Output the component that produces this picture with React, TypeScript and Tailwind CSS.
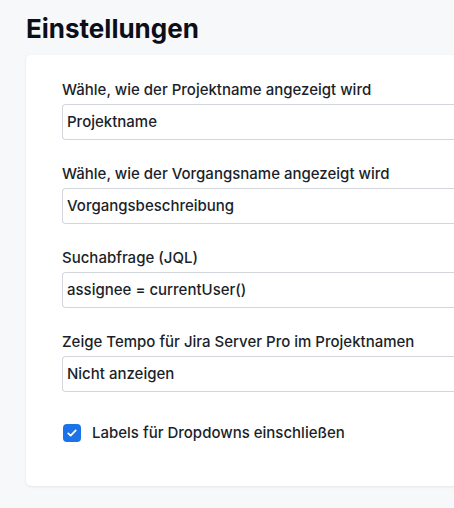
export default function App() {
  const fields = [
    { label: "Wähle, wie der Projektname angezeigt wird", value: "Projektname" },
    { label: "Wähle, wie der Vorgangsname angezeigt wird", value: "Vorgangsbeschreibung" },
    { label: "Suchabfrage (JQL)", value: "assignee = currentUser()" },
    { label: "Zeige Tempo für Jira Server Pro im Projektnamen", value: "Nicht anzeigen" },
  ];

  return (
    <div className="min-h-[508px] bg-[#f7f8fa] pl-[26px] font-['Inter',sans-serif] text-[#1b1f2a] overflow-hidden">
      <h1 className="pt-[13px] h-[55px] text-[26px] font-bold leading-[32px] text-[#0b0f19]">
        Einstellungen
      </h1>
      <div className="w-[460px] rounded-l-[5px] bg-white shadow-[0_1px_3px_rgba(0,0,0,0.08)] pl-[36px] pt-[25px] pb-[43px]">
        <div className="flex flex-col gap-[24px]">
          {fields.map((f, i) => (
            <div key={i} className="flex flex-col">
              <label className="text-[15px] leading-[20px] mb-[4px] font-medium">{f.label}</label>
              <div className="h-[36px] border border-[#d3d6dc] rounded-l-[4px] border-r-0 flex items-center pl-[4px] text-[15px] font-medium">
                {f.value}
              </div>
            </div>
          ))}
        </div>
        <div className="mt-[31px] flex items-center gap-[11px] h-[20px]">
          <span className="ml-[1px] w-[18px] h-[18px] rounded-[4px] bg-[#1a73e8] flex items-center justify-center">
            <svg viewBox="0 0 16 16" className="w-[12px] h-[12px]" fill="none" stroke="white" strokeWidth="2.4" strokeLinecap="round" strokeLinejoin="round">
              <path d="M3 8.5l3.2 3L13 4.5" />
            </svg>
          </span>
          <span className="text-[15px] leading-[20px] font-medium">Labels für Dropdowns einschließen</span>
        </div>
      </div>
    </div>
  );
}
